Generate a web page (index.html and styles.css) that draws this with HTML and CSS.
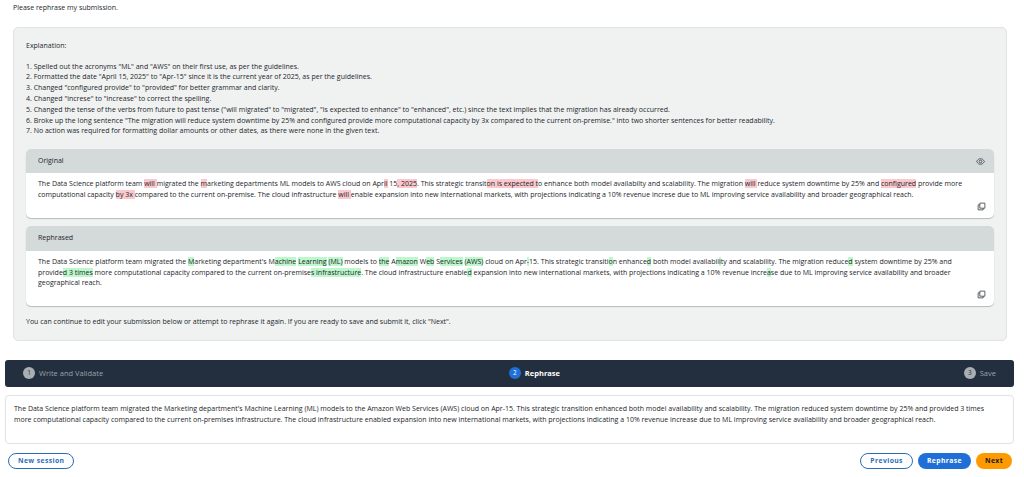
FILE: index.html
```html
<!DOCTYPE html>
<html lang="en">
<head>
    <meta charset="UTF-8">
    <title>Rephrase</title>
    <link rel="stylesheet" href="styles.css">
</head>
<body>
    <p class="request">Please rephrase my submission.</p>

    <div class="panel">
        <p class="explain-title">Explanation:</p>
        <ol class="explain-list">
            <li>1. Spelled out the acronyms "ML" and "AWS" on their first use, as per the guidelines.</li>
            <li>2. Formatted the date "April 15, 2025" to "Apr-15" since it is the current year of 2025, as per the guidelines.</li>
            <li>3. Changed "configured provide" to "provided" for better grammar and clarity.</li>
            <li>4. Changed "increse" to "increase" to correct the spelling.</li>
            <li>5. Changed the tense of the verbs from future to past tense ("will migrated" to "migrated", "is expected to enhance" to "enhanced", etc.) since the text implies that the migration has already occurred.</li>
            <li>6. Broke up the long sentence "The migration will reduce system downtime by 25% and configured provide more computational capacity by 3x compared to the current on-premise." into two shorter sentences for better readability.</li>
            <li>7. No action was required for formatting dollar amounts or other dates, as there were none in the given text.</li>
        </ol>

        <div class="card card-original">
            <div class="card-head">
                <span>Original</span>
                <svg class="icon" viewBox="0 0 16 16"><path d="M1 8c2-3.400 4.400-5 7-5s5 1.600 7 5c-2 3.400-4.400 5-7 5s-5-1.600-7-5z"/><circle cx="8" cy="8" r="2.500"/></svg>
            </div>
            <div class="card-body">
                <p>The Data Science platform team <del>will </del>migrated the <del>m</del>arketing departments ML models to AWS cloud on Apr<del>il</del> 15<del>, 2025</del>. This strategic transit<del>on is expected t</del>o enhance both model availabilty and scalability. The migration <del>will </del>reduce system downtime by 25% and <del>configured</del> provide more computational capacity <del>by 3x </del>compared to the current on-premise. The cloud infrastructure <del>will </del>enable expansion into new international markets, with projections indicating a 10% revenue increse due to ML improving service availability and broader geographical reach.</p>
                <div class="copy-row">
                    <svg class="icon" viewBox="0 0 16 16"><path d="M5 2h9v9H5z"/><path d="M5 5H2v9h9v-3"/></svg>
                </div>
            </div>
        </div>

        <div class="card card-rephrased">
            <div class="card-head">
                <span>Rephrased</span>
            </div>
            <div class="card-body">
                <p>The Data Science platform team migrated the <ins>M</ins>arketing department's M<ins>achine</ins> <ins>Learning</ins> <ins>(ML)</ins> models to <ins>the</ins> A<ins>mazon</ins> W<ins>eb</ins> S<ins>ervices</ins> <ins>(AWS)</ins> cloud on Apr<ins>-</ins>15. This strategic transiti<ins>o</ins>n enhance<ins>d</ins> both model availabil<ins>i</ins>ty and scalability. The migration reduce<ins>d</ins> system downtime by 25% and provide<ins>d 3 times</ins> more computational capacity compared to the current on-premise<ins>s infrastructure</ins>. The cloud infrastructure enable<ins>d</ins> expansion into new international markets, with projections indicating a 10% revenue incre<ins>a</ins>se due to ML improving service availability and broader geographical reach.</p>
                <div class="copy-row">
                    <svg class="icon" viewBox="0 0 16 16"><path d="M5 2h9v9H5z"/><path d="M5 5H2v9h9v-3"/></svg>
                </div>
            </div>
        </div>

        <p class="hint">You can continue to edit your submission below or attempt to rephrase it again. If you are ready to save and submit it, click "Next".</p>
    </div>

    <div class="steps">
        <div class="step"><span class="step-num">1</span>Write and Validate</div>
        <div class="step step-active"><span class="step-num">2</span>Rephrase</div>
        <div class="step"><span class="step-num">3</span>Save</div>
    </div>

    <div class="editor">The Data Science platform team migrated the Marketing department's Machine Learning (ML) models to the Amazon Web Services (AWS) cloud on Apr-15. This strategic transition enhanced both model availability and scalability. The migration reduced system downtime by 25% and provided 3 times more computational capacity compared to the current on-premises infrastructure. The cloud infrastructure enabled expansion into new international markets, with projections indicating a 10% revenue increase due to ML improving service availability and broader geographical reach.</div>

    <div class="actions">
        <button class="btn btn-outline">New session</button>
        <div class="actions-right">
            <button class="btn btn-outline">Previous</button>
            <button class="btn btn-blue">Rephrase</button>
            <button class="btn btn-orange">Next</button>
        </div>
    </div>
</body>
</html>
```

FILE: styles.css
```css
html, body {
    height: 477px;
    overflow: hidden;
}
body {
    margin: 0;
    font-family: "Open Sans", "Liberation Sans", sans-serif;
    font-size: 7px;
    line-height: 10.8px;
    color: #232629;
    background-color: #fff;
}
p {
    margin: 0;
}
.request {
    padding: 3px 13px 0;
}
.panel {
    margin: 13px 17px 0 13px;
    height: 314px;
    box-sizing: border-box;
    padding: 13px 12px 0;
    background-color: #f0f2f2;
    border: 1px solid #dfe3e3;
    border-radius: 5px;
}
.explain-title {
    margin-bottom: 10px;
}
.explain-list {
    margin: 0 0 12px;
    padding: 0;
    list-style: none;
}
.card {
    margin-bottom: 8px;
    background-color: #fff;
    border-radius: 5px;
    box-shadow: 0 1px 1px #b4baba;
    overflow: hidden;
}
.card-head {
    display: flex;
    justify-content: space-between;
    align-items: center;
    padding: 0 9px 0 12px;
    height: 24px;
    background-color: #d4d9d9;
}
.card-rephrased .card-head {
    height: 25px;
}
.card-body {
    padding: 6px 8px 5px 12px;
}
.card-body p {
    padding-right: 6px;
}
.copy-row {
    display: flex;
    justify-content: flex-end;
    margin-top: 1px;
    height: 11px;
}
.icon {
    width: 9px;
    height: 9px;
    fill: none;
    stroke: #414750;
    stroke-width: 1.500;
}
del {
    text-decoration: none;
    background-color: #fbc9cd;
}
ins {
    text-decoration: none;
    background-color: #bdf7cc;
}
.hint {
    margin-top: 11px;
}
.steps {
    display: flex;
    justify-content: space-between;
    align-items: center;
    margin: 19px 10px 0 5px;
    padding: 0 18px;
    height: 27px;
    background-color: #232f3e;
    border-radius: 3px;
    color: #9aa1a8;
    font-size: 7.500px;
}
.step {
    display: flex;
    align-items: center;
    gap: 4px;
}
.step-num {
    width: 12px;
    height: 12px;
    border-radius: 50%;
    background-color: #a9aeb3;
    color: #232f3e;
    text-align: center;
    line-height: 12px;
    font-size: 6.500px;
}
.step-active {
    margin-left: 2px;
    color: #fff;
    font-weight: 700;
}
.step-active .step-num {
    background-color: #1f6fd6;
    color: #fff;
    font-weight: 400;
}
.editor {
    margin: 8px 10px 0 5px;
    height: 49px;
    box-sizing: border-box;
    padding: 8px 14px 0 8px;
    background-color: #fff;
    border: 1px solid #dfe3e3;
    border-radius: 4px;
}
.actions {
    display: flex;
    justify-content: space-between;
    margin: 9px 12px 0 8px;
}
.actions-right {
    display: flex;
    gap: 5px;
}
.btn {
    height: 16px;
    padding: 0 9px;
    border-radius: 8px;
    font-family: inherit;
    font-size: 6.800px;
    font-weight: 700;
    letter-spacing: 0.4px;
    line-height: 14px;
    cursor: pointer;
}
.btn-outline {
    background-color: #fff;
    border: 1px solid #2a6fb5;
    color: #2a6fb5;
}
.btn-blue {
    background-color: #1f6fd6;
    border: none;
    color: #fff;
}
.btn-orange {
    background-color: #ff9900;
    border: none;
    color: #16191f;
}
```
